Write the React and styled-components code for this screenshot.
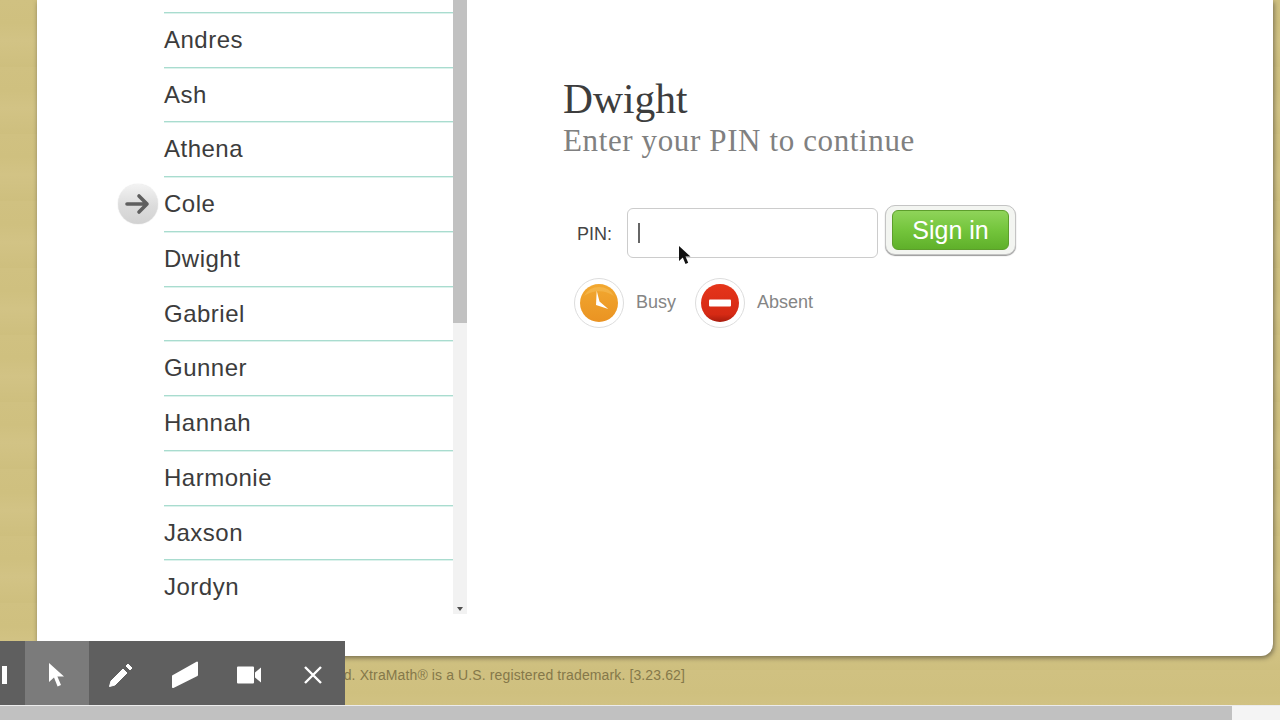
import styled, { createGlobalStyle } from "styled-components";

const GlobalStyle = createGlobalStyle`
  html, body {
    margin: 0;
    padding: 0;
    height: 100%;
    overflow: hidden;
  }
  body {
    font-family: "Liberation Sans", Arial, sans-serif;
    background: #d0c180;
  }
`;

const Page = styled.div`
  position: relative;
  width: 1280px;
  height: 720px;
  overflow: hidden;
  display: flex;
  flex-direction: column;
`;

const Stage = styled.div`
  height: 705px;
  display: flex;
  flex-direction: column;
  background: repeating-linear-gradient(
    180deg,
    #d0c181 0,
    #cfc07f 23px,
    #d2c385 41px,
    #cebf7e 67px
  );
`;

const Card = styled.div`
  height: 656px;
  margin: 0 7px 0 37px;
  flex-shrink: 0;
  display: flex;
  background: #fff;
  border-bottom-right-radius: 12px;
  box-shadow: 1px 2px 5px rgba(70, 65, 50, 0.65);
`;

const ListPane = styled.div`
  width: 430px;
  height: 614px;
  display: flex;
  overflow: hidden;
`;

const List = styled.div`
  flex: 1;
  padding-left: 127px;
  display: flex;
  flex-direction: column;
`;

const ListStub = styled.div`
  height: 13px;
  box-sizing: border-box;
  flex-shrink: 0;
  border-bottom: 1px solid #a9dccf;
  box-shadow: 0 1px 0 #dcf2ec;
`;

const Row = styled.div`
  position: relative;
  height: 55px;
  box-sizing: border-box;
  flex-shrink: 0;
  display: flex;
  align-items: center;
  border-bottom: 1px solid #a9dccf;
  box-shadow: 0 1px 0 #dcf2ec;
  font-size: 24px;
  letter-spacing: 0.5px;
  color: #3c3c3c;

  &:nth-child(4n + 3) {
    height: 54px;
  }
`;

const Marker = styled.span`
  position: absolute;
  left: -46px;
  top: 7px;
  width: 40px;
  height: 40px;
  border-radius: 50%;
  background: linear-gradient(180deg, #f3f3f3 0%, #dcdcdc 55%, #d2d2d2 100%);
  box-shadow: 0 0 1px #bbb;
  display: flex;
  align-items: center;
  justify-content: center;
`;

const ScrollTrack = styled.div`
  width: 14px;
  height: 614px;
  flex-shrink: 0;
  display: flex;
  flex-direction: column;
  justify-content: space-between;
  background: #f2f2f2;
`;

const ScrollThumb = styled.div`
  height: 323px;
  background: #c1c1c1;
`;

const ScrollArrow = styled.div`
  align-self: center;
  margin-bottom: 3px;
  width: 0;
  height: 0;
  border-left: 3.5px solid transparent;
  border-right: 3.5px solid transparent;
  border-top: 4px solid #505050;
`;

const SignInPane = styled.div`
  flex: 1;
  padding: 74px 0 0 96px;
`;

const Title = styled.h1`
  margin: 0;
  font-family: "Liberation Serif", Georgia, serif;
  font-weight: 400;
  font-size: 41.5px;
  line-height: 50px;
  color: #3d3d3d;
`;

const Subtitle = styled.h2`
  margin: 0;
  font-family: "Liberation Serif", Georgia, serif;
  font-weight: 400;
  font-size: 31px;
  line-height: 34px;
  letter-spacing: 0.62px;
  color: #808080;
`;

const PinRow = styled.div`
  margin-top: 47px;
  display: flex;
  align-items: flex-start;
`;

const PinLabel = styled.label`
  width: 50px;
  margin: 4px 0 0 14px;
  height: 50px;
  line-height: 50px;
  font-size: 18px;
  color: #444;
`;

const PinInput = styled.div`
  width: 251px;
  height: 50px;
  margin-top: 3px;
  box-sizing: border-box;
  border: 1px solid #ccc;
  border-radius: 6px;
  display: flex;
  align-items: center;
  padding-left: 10px;
`;

const Caret = styled.span`
  width: 1.5px;
  height: 20px;
  background: #666;
`;

const SignInFrame = styled.div`
  margin-left: 7px;
  width: 131px;
  height: 50px;
  box-sizing: border-box;
  border: 1px solid #c4c4c4;
  border-radius: 10px;
  background: #f3f5f1;
  box-shadow: 0 1px 1px #999;
  padding: 4px 6px;
`;

const SignInButton = styled.button`
  width: 117px;
  height: 40px;
  padding: 0;
  border: 1px solid #5d9e2c;
  border-radius: 6px;
  background: linear-gradient(180deg, #8fd45a 0%, #74c53c 50%, #5fb02a 100%);
  color: #fff;
  font-family: inherit;
  font-size: 25px;
`;

const StatusRow = styled.div`
  margin-top: 19px;
  margin-left: 11px;
  display: flex;
  align-items: center;
`;

const StatusRing = styled.span`
  width: 50px;
  height: 50px;
  box-sizing: border-box;
  border: 1px solid #ddd;
  border-radius: 50%;
  display: flex;
  align-items: center;
  justify-content: center;
  background: #fff;
`;

const StatusLabel = styled.span`
  margin: 0 19px 2px 12px;
  font-size: 18px;
  color: #858585;
`;

const Footer = styled.div`
  width: 685px;
  padding-top: 11px;
  display: flex;
  justify-content: flex-end;
  box-sizing: border-box;
  font-size: 14px;
  line-height: 16px;
  letter-spacing: 0.12px;
  white-space: nowrap;
  color: #85784a;
`;

const HorizontalBar = styled.div`
  height: 15px;
  border-top: 1px solid #ececec;
  box-sizing: border-box;
  display: flex;
  background: #f4f4f4;
`;

const HorizontalThumb = styled.div`
  width: 1232px;
  background: #c1c1c1;
`;

const Toolbar = styled.div`
  position: absolute;
  left: 0;
  top: 641px;
  height: 64px;
  display: flex;
  background: #5f5f5f;
`;

const ToolButton = styled.div`
  width: ${(p) => p.$width || 64}px;
  height: 64px;
  box-sizing: border-box;
  padding-top: 3px;
  display: flex;
  align-items: center;
  justify-content: ${(p) => (p.$clip ? "flex-start" : "center")};
  background: ${(p) => (p.$active ? "#7b7b7b" : "transparent")};
`;

const PauseStub = styled.span`
  margin-left: 2px;
  width: 5px;
  height: 18px;
  background: #fff;
`;

const Pointer = styled.svg`
  position: absolute;
  left: 678px;
  top: 245px;
`;

const names = [
  "Andres",
  "Ash",
  "Athena",
  "Cole",
  "Dwight",
  "Gabriel",
  "Gunner",
  "Hannah",
  "Harmonie",
  "Jaxson",
  "Jordyn",
];

function ArrowIcon() {
  return (
    <svg width="26" height="24" viewBox="0 0 26 24">
      <path
        d="M2 12h20M14 4l8 8-8 8"
        fill="none"
        stroke="#5f5f5f"
        strokeWidth="3.6"
        strokeLinecap="round"
        strokeLinejoin="round"
      />
    </svg>
  );
}

function ClockIcon() {
  return (
    <svg width="38" height="38" viewBox="0 0 38 38">
      <defs>
        <linearGradient id="busy" x1="0" y1="0" x2="0" y2="1">
          <stop offset="0" stopColor="#f2a830" />
          <stop offset="1" stopColor="#ea9322" />
        </linearGradient>
      </defs>
      <circle cx="19" cy="19" r="19" fill="url(#busy)" />
      <path d="M4 12a17 17 0 0 1 30 0a26 26 0 0 0-30 0z" fill="#f8cf72" opacity="0.35" />
      <path d="M16.700 6.700L19.500 17.500L28.300 25L16 21z" fill="#fff" />
    </svg>
  );
}

function NoEntryIcon() {
  return (
    <svg width="38" height="38" viewBox="0 0 38 38">
      <defs>
        <linearGradient id="absent" x1="0" y1="0" x2="0" y2="1">
          <stop offset="0" stopColor="#e5351a" />
          <stop offset="0.8" stopColor="#d62a14" />
          <stop offset="1" stopColor="#a81c0d" />
        </linearGradient>
      </defs>
      <circle cx="19" cy="19" r="19" fill="url(#absent)" />
      <rect x="8" y="15.500" width="22" height="7" rx="1" fill="#fff" />
    </svg>
  );
}

function App() {
  return (
    <Page>
      <GlobalStyle />
      <Stage>
        <Card>
          <ListPane>
            <List>
              <ListStub />
              {names.map((name) => (
                <Row key={name}>
                  {name === "Cole" && (
                    <Marker>
                      <ArrowIcon />
                    </Marker>
                  )}
                  {name}
                </Row>
              ))}
            </List>
            <ScrollTrack>
              <ScrollThumb />
              <ScrollArrow />
            </ScrollTrack>
          </ListPane>
          <SignInPane>
            <Title>Dwight</Title>
            <Subtitle>Enter your PIN to continue</Subtitle>
            <PinRow>
              <PinLabel>PIN:</PinLabel>
              <PinInput>
                <Caret />
              </PinInput>
              <SignInFrame>
                <SignInButton>Sign in</SignInButton>
              </SignInFrame>
            </PinRow>
            <StatusRow>
              <StatusRing>
                <ClockIcon />
              </StatusRing>
              <StatusLabel>Busy</StatusLabel>
              <StatusRing>
                <NoEntryIcon />
              </StatusRing>
              <StatusLabel>Absent</StatusLabel>
            </StatusRow>
          </SignInPane>
        </Card>
        <Footer>All rights reserved. XtraMath® is a U.S. registered trademark. [3.23.62]</Footer>
      </Stage>
      <HorizontalBar>
        <HorizontalThumb />
      </HorizontalBar>
      <Toolbar>
        <ToolButton $width={25} $clip>
          <PauseStub />
        </ToolButton>
        <ToolButton $active>
          <svg width="18" height="26" viewBox="0 0 18 26">
            <path d="M1 1v19l5-4.500 3.600 9 3.400-1.400-3.600-8.600H16z" fill="#fff" />
          </svg>
        </ToolButton>
        <ToolButton>
          <svg width="26" height="26" viewBox="0 0 26 26">
            <path d="M1.500 24.500L3 19L15 7L19 11L7 23z" fill="#fff" stroke="#fff" strokeLinejoin="round" />
            <path d="M18 4L20 2L24 6L22 8z" fill="#fff" stroke="#fff" strokeLinejoin="round" />
          </svg>
        </ToolButton>
        <ToolButton>
          <svg width="28" height="28" viewBox="0 0 28 28">
            <path d="M2 15L26 1.500V14L2 26z" fill="#fff" stroke="#fff" strokeWidth="2" strokeLinejoin="round" />
          </svg>
        </ToolButton>
        <ToolButton>
          <svg width="26" height="18" viewBox="0 0 26 18">
            <path d="M1 1.500A1 1 0 0 1 2 .5h15a1 1 0 0 1 1 1v15a1 1 0 0 1-1 1H2a1 1 0 0 1-1-1z M19 6.500l6-5v15l-6-5z" fill="#fff" />
          </svg>
        </ToolButton>
        <ToolButton>
          <svg width="20" height="20" viewBox="0 0 20 20">
            <path d="M2 2l16 16M18 2L2 18" stroke="#fff" strokeWidth="2.4" fill="none" />
          </svg>
        </ToolButton>
      </Toolbar>
      <Pointer width="14" height="20" viewBox="0 0 14 20">
        <path d="M1 1v15l3.800-3.400L7.500 19l2.700-1.200-2.700-6.200H12.500z" fill="#111" />
      </Pointer>
    </Page>
  );
}

export default App;
